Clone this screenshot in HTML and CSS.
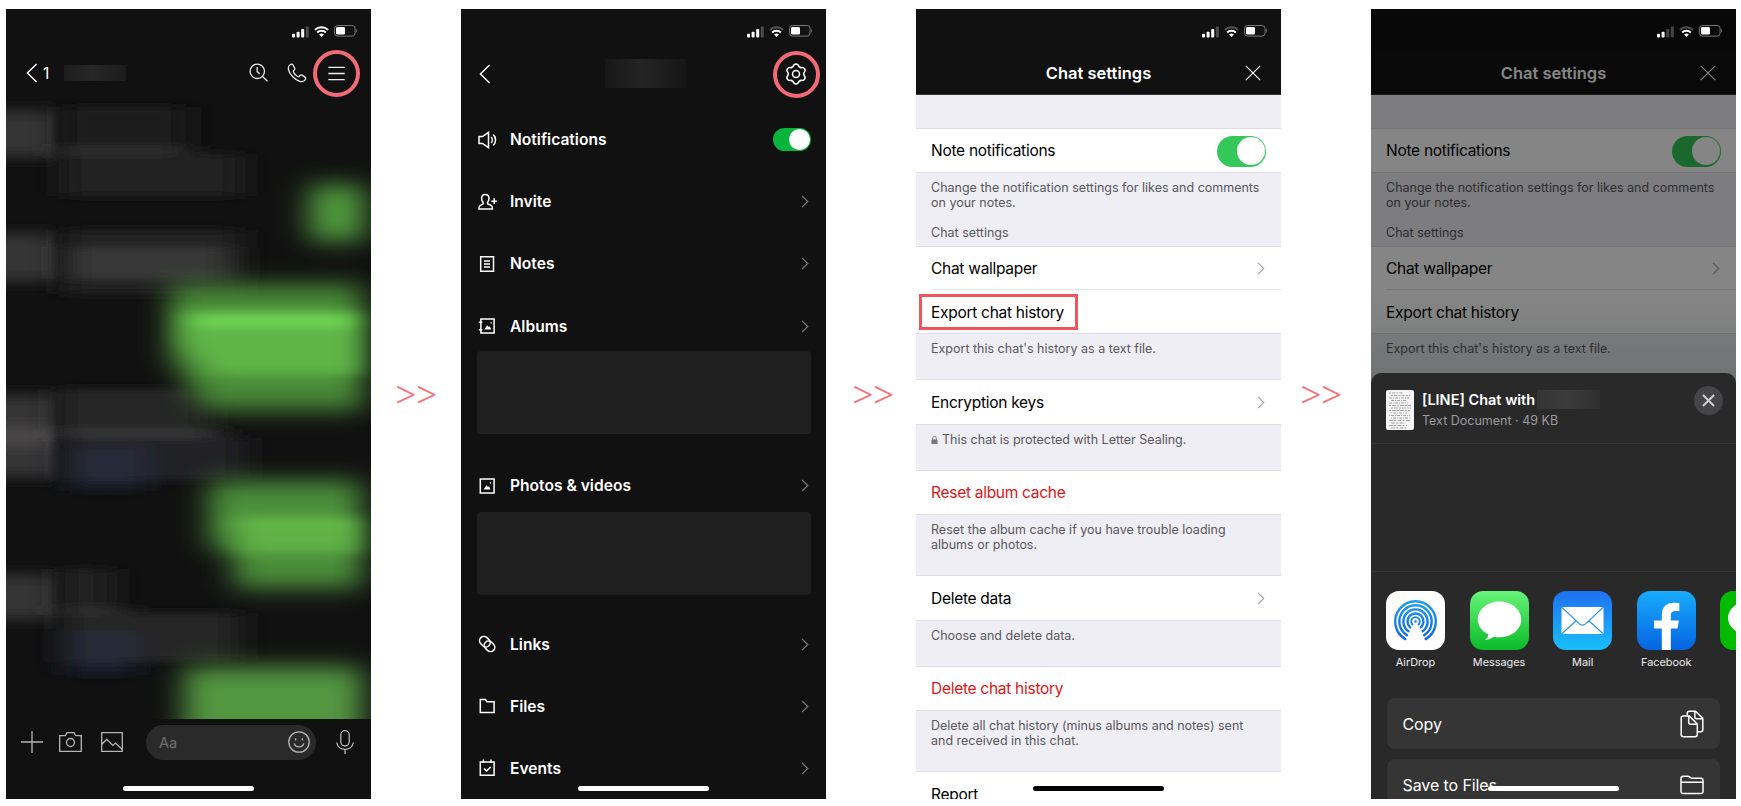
FILE: index.html
```html
<!DOCTYPE html>
<html lang="en">
<head>
<meta charset="utf-8">
<title>Export chat history</title>
<link rel="stylesheet" href="styles.css">
</head>
<body>
<svg class="defs" width="0" height="0" aria-hidden="true">
  <defs>
    <symbol id="signal" viewBox="0 0 17 11"><rect x="0" y="7.3" width="3" height="3.7" rx=".8"/><rect x="4.6" y="5.2" width="3" height="5.8" rx=".8"/><rect x="9.2" y="2.4" width="3" height="8.6" rx=".8"/><rect x="13.8" y="0" width="3" height="11" rx=".8" opacity=".25"/></symbol>
    <symbol id="signal-weak" viewBox="0 0 17 11"><rect x="0" y="7.3" width="3" height="3.7" rx=".8"/><rect x="4.6" y="5.2" width="3" height="5.8" rx=".8"/><rect x="9.2" y="2.4" width="3" height="8.6" rx=".8" opacity=".25"/><rect x="13.8" y="0" width="3" height="11" rx=".8" opacity=".25"/></symbol>
    <symbol id="wifi" viewBox="0 0 15 11"><path class="wifi-outer" d="M.9 3.9a9.4 9.4 0 0 1 13.2 0" fill="none" stroke="currentColor" stroke-width="2"/><path d="M3.2 6.5a6.1 6.1 0 0 1 8.6 0" fill="none" stroke="currentColor" stroke-width="2"/><path d="M7.5 11 5.1 8.6a3.4 3.4 0 0 1 4.8 0z"/></symbol>
    <symbol id="battery" viewBox="0 0 24 12"><rect x=".5" y=".5" width="20.6" height="10.6" rx="3" fill="none" stroke="#777" stroke-width="1"/><rect x="2" y="2" width="9" height="7.6" rx="1.4"/><path d="M22.3 3.8v4c1.2-.6 1.2-3.4 0-4z" fill="#777"/></symbol>
    <symbol id="back" viewBox="0 0 12 20"><path d="M10.6 1 1.4 10l9.2 9" fill="none" stroke="currentColor" stroke-width="1.4"/></symbol>
    <symbol id="chev" viewBox="0 0 8 13"><path d="M1 .9 6.7 6.5 1 12.1" fill="none" stroke="currentColor" stroke-width="1.3"/></symbol>
    <symbol id="cross" viewBox="0 0 16 16"><path d="m.8.8 14.4 14.4M15.2.8.8 15.2" fill="none" stroke="currentColor" stroke-width="1.2"/></symbol>
  </defs>
</svg>

<main class="steps">
  <section class="phone dark">
    <div class="status"><svg class="sig"><use href="#signal"/></svg><svg class="wifi full"><use href="#wifi"/></svg><svg class="bat"><use href="#battery"/></svg></div>
    <header class="chat-head">
      <svg class="back"><use href="#back"/></svg><span class="unread">1</span><span class="name-mask"></span>
      <svg class="i-search" viewBox="0 0 20 20"><circle cx="8.3" cy="8.3" r="7.2"/><path d="m13.5 13.5 5 4.8M8.200 4v4.800l2.500 2"/></svg>
      <svg class="i-call" viewBox="0 0 20 20"><path d="M4.600 1.200C2.800 1.700.9 3.600 1.400 6.300c.9 4.900 6.700 11 11.900 12.300 2.400.5 4.900-1.100 5.300-2.800.2-.8 0-1.300-.5-1.700l-3-2c-.6-.4-1.200-.4-1.700.1l-1.300 1.300c-.5.4-1 .4-1.600 0-1.800-1.200-3-2.600-4-4.200-.4-.7-.3-1.100.1-1.500L7.500 6.700c.5-.5.5-1.100.2-1.600L5.900 1.800c-.3-.5-.7-.7-1.300-.6z"/></svg>
      <span class="menu-ring"><svg viewBox="0 0 17 15"><path d="M.3 1.300h16.400M.3 7.500h16.400M.3 13.700h16.400"/></svg></span>
    </header>
    <svg class="thread" viewBox="0 0 365 626">
      <defs>
        <filter id="soft" filterUnits="userSpaceOnUse" x="60" y="0" width="380" height="720"><feGaussianBlur stdDeviation="15 11"/></filter>
        <filter id="glow" filterUnits="userSpaceOnUse" x="60" y="0" width="380" height="720"><feGaussianBlur stdDeviation="14 6"/></filter>
        <filter id="fine" filterUnits="userSpaceOnUse" x="-20" y="-20" width="400" height="680"><feGaussianBlur stdDeviation="16 4"/></filter>
        <filter id="face" filterUnits="userSpaceOnUse" x="-60" y="-20" width="200" height="680"><feGaussianBlur stdDeviation="5 7"/></filter>
      </defs>
      <g filter="url(#face)">
        <rect x="-40" y="18" width="89" height="46" fill="#353535"/>
        <rect x="-40" y="141" width="89" height="47" fill="#353535"/>
        <rect x="-40" y="302" width="89" height="82" fill="#343434"/>
        <rect x="-40" y="334" width="89" height="18" fill="#4b4848"/>
        <rect x="-40" y="482" width="89" height="44" fill="#363636"/>
      </g>
      <g filter="url(#fine)">
        <rect x="56" y="14" width="124" height="44" fill="#1f1f1f"/>
        <rect x="50" y="54" width="130" height="9" fill="#303030"/>
        <rect x="58" y="61" width="176" height="42" fill="#212121"/>
        <rect x="58" y="137" width="176" height="64" fill="#212121"/>
        <rect x="62" y="154" width="160" height="32" fill="#373737"/>
        <rect x="52" y="296" width="150" height="40" fill="#262626"/>
        <rect x="52" y="336" width="160" height="9" fill="#383838"/>
        <rect x="58" y="345" width="180" height="42" fill="#242425"/>
        <rect x="64" y="354" width="76" height="34" fill="#252a38"/>
        <rect x="64" y="388" width="76" height="10" fill="#141a29"/>
        <rect x="54" y="476" width="52" height="38" fill="#222"/>
        <rect x="52" y="514" width="66" height="8" fill="#303030"/>
        <rect x="58" y="520" width="174" height="48" fill="#272727"/>
        <rect x="60" y="538" width="70" height="32" fill="#252a38"/>
        <rect x="60" y="570" width="70" height="12" fill="#141a29"/>
      </g>
      <g filter="url(#soft)">
        <rect x="303" y="92" width="56" height="56" fill="#4f963c"/>
        <path d="M164 192h192v125H200l-36-52z" fill="#4a8b38"/>
        <path d="M203 388h152v107H228v-38h-25z" fill="#4b8e3a"/>
        <rect x="178" y="574" width="178" height="110" fill="#529640"/>
      </g>
      <g filter="url(#glow)">
        <path d="M178 218h174v64H208l-30-34z" fill="#61b548"/>
        <rect x="186" y="224" width="164" height="7" fill="#78ee58"/>
        <rect x="234" y="424" width="118" height="36" fill="#60b147"/>
        <rect x="226" y="426" width="126" height="5" fill="#69c44d"/>
      </g>
    </svg>
    <footer class="composer">
      <svg class="i-plus" viewBox="0 0 22 22"><path d="M0 11h22M11 0v22"/></svg>
      <svg class="i-cam" viewBox="0 0 23 20"><path d="M.7 3.700h5.600L8 .7h7l1.700 3h5.600v15.600H.7z"/><circle cx="11.500" cy="10.500" r="4"/></svg>
      <svg class="i-pic" viewBox="0 0 22 20"><path d="M.7.7h20.600v18.600H.7zM1 12.200l4.800-5 6 6.200 2.600-2.300 6.700 6.200"/></svg>
      <div class="field"><span>Aa</span><svg viewBox="0 0 22 22"><circle cx="11" cy="11" r="10.200"/><path d="M6.200 12.400c1.200 4.600 8.400 4.600 9.600 0"/><path class="dots" d="M7.600 7.200v2.200M14.400 7.200v2.200"/></svg></div>
      <svg class="i-mic" viewBox="0 0 18 24"><rect x="4.800" y=".7" width="8.400" height="15.300" rx="4.200"/><path d="M.7 12.500c.6 4.200 4 6.800 8.300 6.800s7.700-2.600 8.300-6.800M9 19.300V24"/></svg>
    </footer>
    <span class="home"></span>
  </section>

  <span class="next">&gt;&gt;</span>

  <section class="phone dark">
    <div class="status"><svg class="sig"><use href="#signal"/></svg><svg class="wifi"><use href="#wifi"/></svg><svg class="bat"><use href="#battery"/></svg></div>
    <header class="menu-head">
      <svg class="back"><use href="#back"/></svg>
      <span class="title-mask"></span>
      <span class="gear-ring"><svg viewBox="-11 -11 22 22"><path d="M-3-7.300C-1.800-11 1.800-11 3-7.300L4.820-6.250C8.630-7.060 10.430-3.940 7.820-1.050V1.050C10.430 3.940 8.630 7.060 4.820 6.250L3 7.300C1.800 11-1.800 11-3 7.300L-4.820 6.250C-8.630 7.060-10.430 3.940-7.820 1.050V-1.050C-10.430-3.940-8.630-7.060-4.820-6.250z"/><circle r="3.500"/></svg></span>
    </header>
    <div class="menu">
      <div class="item"><svg viewBox="0 0 20 18"><path d="M1 5.500h3.500l6-4.200v15.400l-6-4.200H1zM13.200 6c1.400 1.600 1.400 4.400 0 6M15.300 3.600c3 2.800 3 8 0 10.800"/></svg><b>Notifications</b><i class="switch small"></i></div>
      <div class="item"><svg viewBox="0 0 20 18"><path d="M7.300 1.600c2.300 0 3.700 1.600 3.700 3.900 0 1.900-.7 2.900-1.500 3.700v1.600l3.500 1.500c1.200.6 1.500 1.300 1.500 3.600H.9c0-2.300.3-3 1.500-3.600l2.700-1.500V9.200c-.8-.8-1.500-1.800-1.500-3.700 0-2.300 1.400-3.900 3.700-3.900zM16.200 5.300v5.800M13.300 8.200h5.800"/></svg><b>Invite</b><svg class="chev"><use href="#chev"/></svg></div>
      <div class="item"><svg viewBox="0 0 20 18"><path d="M2.700 1.700h12.800v14.600H2.700zM6 6h6M6 9h6M6 12h6"/></svg><b>Notes</b><svg class="chev"><use href="#chev"/></svg></div>
      <div class="item"><svg viewBox="0 0 20 18"><path d="M2.900 1.900h13.200v14.200H2.900zM.8 5.200h3.500M.8 12.800h3.500"/><path class="solid" d="m6.300 12.500 2.900-4.200 1.500 1.800 1-.9 1.500 3.300zM12.500 5.300h1.300v1.300h-1.300z"/></svg><b>Albums</b><svg class="chev"><use href="#chev"/></svg></div>
      <div class="strip"></div>
      <div class="item"><svg viewBox="0 0 20 18"><path d="M2.300 1.900h13.800v14.200H2.300z"/><path class="solid" d="m5.600 12.500 2.900-4.200 1.500 1.800 1-.9 1.500 3.300zM11.900 5.300h1.300v1.300h-1.300z"/></svg><b>Photos &amp; videos</b><svg class="chev"><use href="#chev"/></svg></div>
      <div class="strip"></div>
      <div class="item"><svg viewBox="0 0 20 18"><g transform="rotate(45 9.200 9)"><rect x=".2" y="4.700" width="11.400" height="8.600" rx="4.300"/><rect x="6.800" y="4.700" width="11.400" height="8.600" rx="4.300"/></g></svg><b>Links</b><svg class="chev"><use href="#chev"/></svg></div>
      <div class="item"><svg viewBox="0 0 20 18"><path d="M2.300 2.500h5.200l1.500 2.300h7.100v10.800H2.300z"/></svg><b>Files</b><svg class="chev"><use href="#chev"/></svg></div>
      <div class="item"><svg viewBox="0 0 20 18"><path d="M2.300 3h13.800v13.300H2.300zM5.400.5V4M13 .5V4M6 9.500l2.500 2.400 4.400-3.900"/></svg><b>Events</b><svg class="chev"><use href="#chev"/></svg></div>
    </div>
    <span class="home"></span>
  </section>

  <span class="next second">&gt;&gt;</span>

  <section class="phone light">
    <div class="status"><svg class="sig"><use href="#signal"/></svg><svg class="wifi"><use href="#wifi"/></svg><svg class="bat"><use href="#battery"/></svg></div>
    <header class="set-head"><b>Chat settings</b><svg><use href="#cross"/></svg></header>
    <div class="settings">
      <div class="gap first"></div>
      <div class="row short"><span>Note notifications</span><i class="switch"></i></div>
      <div class="gap intro"><p>Change the notification settings for likes and comments on your notes.</p><p class="group">Chat settings</p></div>
      <div class="row inset"><span>Chat wallpaper</span><svg class="chev"><use href="#chev"/></svg></div>
      <div class="row"><span class="boxed">Export chat history</span></div>
      <div class="gap one"><p>Export this chat's history as a text file.</p></div>
      <div class="row"><span>Encryption keys</span><svg class="chev"><use href="#chev"/></svg></div>
      <div class="gap lockgap"><p><svg class="lock" viewBox="0 0 8 10"><path d="M1.900 5V3a2.100 2.100 0 0 1 4.200 0v2" fill="none" stroke="#77777b" stroke-width="1.100"/><rect x=".5" y="4.300" width="7" height="5.400" rx=".8" fill="#77777b"/></svg>This chat is protected with Letter Sealing.</p></div>
      <div class="row short danger"><span>Reset album cache</span></div>
      <div class="gap two"><p>Reset the album cache if you have trouble loading albums or photos.</p></div>
      <div class="row"><span>Delete data</span><svg class="chev"><use href="#chev"/></svg></div>
      <div class="gap lockgap"><p>Choose and delete data.</p></div>
      <div class="row short danger"><span>Delete chat history</span></div>
      <div class="gap two"><p>Delete all chat history (minus albums and notes) sent and received in this chat.</p></div>
      <div class="row"><span>Report</span></div>
    </div>
    <span class="home"></span>
  </section>

  <span class="next third">&gt;&gt;</span>

  <section class="phone light dimmed">
    <div class="status"><svg class="sig"><use href="#signal-weak"/></svg><svg class="wifi"><use href="#wifi"/></svg><svg class="bat"><use href="#battery"/></svg></div>
    <header class="set-head"><b>Chat settings</b><svg><use href="#cross"/></svg></header>
    <div class="settings">
      <div class="gap first"></div>
      <div class="row short"><span>Note notifications</span><i class="switch"></i></div>
      <div class="gap intro"><p>Change the notification settings for likes and comments on your notes.</p><p class="group">Chat settings</p></div>
      <div class="row inset"><span>Chat wallpaper</span><svg class="chev"><use href="#chev"/></svg></div>
      <div class="row"><span>Export chat history</span></div>
      <div class="gap one"><p>Export this chat's history as a text file.</p></div>
    </div>
    <div class="shade"></div>
    <div class="sheet">
      <div class="doc">
        <svg class="thumb" viewBox="0 0 28 40"><rect width="28" height="40" rx="2" fill="#f6f6f6"/><g fill="none" stroke="#999" stroke-width=".9"><path d="M3 3h14M5 5.500h19" stroke-dasharray="2 1 3 1.500"/><path d="M3 8h20M5 10.500h15M3 13h19" stroke-dasharray="3 1 1 1"/><path d="M3 15.500h22M5 18h20M3 20.500h21" stroke-dasharray="2 1 4 1"/><path d="M5 23h16M3 25.500h21M5 28h19" stroke-dasharray="1 1 3 1"/><path d="M3 30.500h21M5 33h14M3 35.500h18M5 38h15" stroke-dasharray="4 1 2 1.500"/></g></svg>
        <div class="doc-text"><div class="doc-title"><b>[LINE] Chat with</b><span class="who-mask"></span></div><small>Text Document · 49 KB</small></div>
        <span class="close"><svg viewBox="0 0 13 13"><path d="m1 1 11 11M12 1 1 12"/></svg></span>
      </div>
      <div class="contacts"></div>
      <div class="apps">
        <div class="app"><svg viewBox="0 0 59 59"><defs><linearGradient id="ad" gradientUnits="userSpaceOnUse" x1="0" y1="10" x2="0" y2="50"><stop stop-color="#1c9cf3"/><stop offset="1" stop-color="#0f62e6"/></linearGradient></defs><rect width="59" height="59" rx="13" fill="#fff"/><g fill="none" stroke="url(#ad)" stroke-width="2.400" stroke-linecap="round"><path d="M19.300 48.100a20.300 20.300 0 1 1 20.400 0"/><path d="M20.900 44.200a16.200 16.200 0 1 1 17.200 0"/><path d="M22.400 40.300a12.100 12.100 0 1 1 14.200 0"/><path d="M24.150 36.450a8 8 0 1 1 10.700 0"/><path d="M26.500 33.500a4.300 4.300 0 1 1 6 0" stroke-width="1.800"/></g><circle cx="29.500" cy="30.500" r="1.300" fill="#147be9"/></svg><span>AirDrop</span></div>
        <div class="app"><svg viewBox="0 0 59 59"><defs><linearGradient id="ms" x2="0" y2="1"><stop stop-color="#67f47a"/><stop offset="1" stop-color="#0abb28"/></linearGradient></defs><rect width="59" height="59" rx="13" fill="url(#ms)"/><path d="M29.500 10.500c12 0 21.700 8 21.700 17.900s-9.700 17.900-21.700 17.900c-2 0-3.900-.2-5.700-.6-2.500 2-5.300 3.100-8.600 3.100 2-1.500 3-3.300 3.300-5.300C12 40.200 7.800 34.800 7.800 28.400c0-9.900 9.700-17.900 21.700-17.900z" fill="#fff"/></svg><span>Messages</span></div>
        <div class="app"><svg viewBox="0 0 59 59"><defs><linearGradient id="ml" x2="0" y2="1"><stop stop-color="#1f70f0"/><stop offset="1" stop-color="#19bffb"/></linearGradient></defs><rect width="59" height="59" rx="13" fill="url(#ml)"/><rect x="8.500" y="16" width="42" height="27" rx="1.500" fill="#fff"/><path d="m9 16.500 17.500 16.300c2 1.700 4 1.700 6 0L50 16.500M9 42.500l14.500-13M50 42.500l-14.500-13" fill="none" stroke="#2390f3" stroke-width="1.100"/></svg><span>Mail</span></div>
        <div class="app"><svg viewBox="0 0 59 59"><defs><linearGradient id="fb" x2="0" y2="1"><stop stop-color="#18acfe"/><stop offset="1" stop-color="#0664e2"/></linearGradient></defs><rect width="59" height="59" rx="13" fill="url(#fb)"/><path d="M24.800 59V37.500H17V29.400h7.800V25c0-8.800 4.200-13.300 12-13.300 2.200 0 4.200.2 5.500.5v7.900h-3.300c-3.900 0-5.200 1.600-5.200 4.800v4.500h8l-1.200 8.100h-6.800V59z" fill="#fff"/></svg><span>Facebook</span></div>
        <div class="app"><svg viewBox="0 0 59 59"><rect width="59" height="59" rx="13" fill="#0b0"/><ellipse cx="29.500" cy="27" rx="21.500" ry="17" fill="#fff"/></svg></div>
      </div>
      <div class="action"><span>Copy</span><svg viewBox="0 0 24 28"><path d="M7.300 5.500V3.200c0-1.300.7-2 2-2h6.200l7.300 7v11.600c0 1.200-.8 2-2 2h-3.300M14.800 1.500v5.200c0 1.300.8 2 2 2h5.700"/><path d="M1.200 8c0-1.300.7-2.100 2-2.100h6l8.100 8.100v10.600c0 1.300-.8 2.100-2.100 2.100h-12c-1.300 0-2-.8-2-2.100zM8.700 6.300v6c0 1.200.8 2 2 2H17"/></svg></div>
      <div class="action"><span>Save to Files</span><svg class="folder" viewBox="0 0 24 20"><path d="M1 3.500C1 2 1.800 1.200 3.300 1.200h4.300c.8 0 1.300.2 1.900.7l1 .8c.5.4.9.5 1.600.5h8.600c1.500 0 2.300.8 2.300 2.300v10.800c0 1.500-.8 2.300-2.300 2.300H3.300C1.800 18.600 1 17.800 1 16.300zM1 7.300h22"/></svg></div>
    </div>
    <span class="home"></span>
  </section>
</main>
</body>
</html>
```
FILE: styles.css
```css
* { box-sizing: border-box; }
body { margin: 0; background: #fff; font-family: Inter, "Liberation Sans", sans-serif; }
.defs { position: absolute; }
p { margin: 0; }
i { font-style: normal; }

.steps { display: flex; width: 1741px; height: 806px; padding: 9px 0 0 6px; overflow: hidden; }
.phone { position: relative; flex: none; width: 365px; height: 790px; overflow: hidden; display: flex; flex-direction: column; background: #111; color: #fff; }
.next { flex: none; width: 90px; height: 42px; margin-top: 364px; padding-left: 24.500px; color: #f4717a; font: 300 36.500px/42px "Open Sans", "Liberation Sans", sans-serif; white-space: nowrap; -webkit-text-stroke: .3px #f4717a; }
.next.second { padding-left: 26.500px; }
.next.third { padding-left: 19.500px; }

/* status bar */
.status { flex: none; display: flex; align-items: flex-start; justify-content: flex-end; height: 42px; padding: 16px 13px 0 0; color: #fff; fill: #fff; }
.sig { width: 17px; height: 12px; margin: 1px 5px 0 0; }
.wifi { --outer: .3; width: 15px; height: 11px; margin: 1px 5px 0 0; }
.wifi.full { --outer: 1; }
.wifi-outer { opacity: var(--outer, .3); }
.bat { width: 24px; height: 12px; }
.home { position: absolute; left: 117px; top: 777px; width: 131px; height: 5px; border-radius: 3px; background: #fff; z-index: 5; }
.light .home { background: #000; }
.dimmed .home { background: #fff; }

/* chat */
.chat-head { flex: none; display: flex; align-items: center; height: 42px; padding: 2px 10px 0 20px; }
.chat-head svg { fill: none; stroke: #eee; stroke-width: 1.3; flex: none; }
.back { width: 12px; height: 20px; color: #fff; }
.unread { margin-left: 5px; width: 11px; font-size: 15.500px; }
.name-mask { width: 62px; height: 16px; margin-left: 10px; background: linear-gradient(90deg, #1d1d1d, #272727 45%, #1c1c1c); }
.i-search { width: 20px; height: 20px; margin-left: 123px; }
.i-call { width: 20px; height: 20px; margin-left: 18px; }
.menu-ring, .gear-ring { width: 47px; height: 47px; border: 4px solid #f26a75; border-radius: 50%; display: flex; align-items: center; justify-content: center; flex: none; }
.menu-ring { margin-left: 6px; }
.menu-ring svg { width: 17px; height: 15px; }
.thread { flex: none; width: 365px; height: 626px; }
.composer { flex: none; display: flex; align-items: center; height: 46px; padding-left: 15px; }
.composer svg { fill: none; stroke: #b5b5b5; stroke-width: 1.3; flex: none; }
.i-plus { width: 22px; height: 22px; }
.i-cam { width: 23px; height: 20px; margin-left: 16px; }
.i-pic { width: 22px; height: 20px; margin-left: 19px; }
.field { display: flex; align-items: center; justify-content: space-between; width: 170px; height: 35px; margin-left: 23px; padding: 0 6px 0 13px; border-radius: 18px; background: #2a2a2a; color: #707070; font-size: 14.500px; }
.field svg { width: 22px; height: 22px; }
.i-mic { width: 18px; height: 24px; margin-left: 19.500px; }

/* chat menu */
.menu-head { flex: none; display: flex; align-items: center; height: 45px; padding: 0 6px 0 18px; }
.title-mask { width: 81px; height: 29px; margin-left: 114px; background: linear-gradient(90deg, #181818, #242424 45%, #161616); }
.gear-ring { margin: 1px 0 0 86.500px; }
.gear-ring svg { width: 22px; height: 22px; fill: none; stroke: #fff; stroke-width: 1.500; stroke-linejoin: round; }
.menu { flex: none; padding: 12.500px 15px 0 17px; }
.item { display: flex; align-items: center; height: 62.200px; font-size: 15.600px; }
.item > svg:first-child { width: 20px; height: 18px; fill: none; stroke: #fff; stroke-width: 1.500; }
.item b { flex: 1; margin-left: 12px; font-weight: 600; white-space: nowrap; }
.item .solid { fill: #fff; stroke: none; }
.chev { width: 8px; height: 13px; margin-right: 2px; color: #777; }
.strip { width: 334px; height: 83px; margin: -6.500px 0 21px -1.500px; border-radius: 4px; background: #202020; }
.strip + .item + .strip { margin: -5px 0 18px -1.500px; }
.switch { flex: none; width: 49px; height: 31px; margin-top: 1px; border-radius: 16px; background: #34c85a; padding: 1.500px; display: flex; justify-content: flex-end; }
.switch::after { content: ""; width: 28px; height: 28px; border-radius: 50%; background: #fff; }
.switch.small { width: 38px; height: 23px; margin: 0 .5px 0 0; background: #07b53b; padding: 1px; }
.switch.small::after { width: 21px; height: 21px; }

/* settings */
.set-head { flex: none; display: flex; align-items: center; justify-content: center; height: 44px; padding-top: 1px; border-bottom: 1px solid #333; position: relative; }
.set-head b { font-size: 16.500px; font-weight: 600; }
.set-head svg { position: absolute; right: 20px; top: 14px; width: 16px; height: 16px; }
.light { background: #fff; }
.light .status, .light .set-head { background: #111; }
.settings { flex: none; color: #000; }
.row { display: flex; align-items: center; justify-content: space-between; height: 44px; padding: 0 15px; background: #fff; font-size: 15.500px; letter-spacing: -.28px; }
.row .chev { color: #a9a9ad; margin-right: 1px; }
.row.short { height: 43px; }
.row.danger { color: #dc1515; }
.row.inset { height: 43px; position: relative; }
.row.inset::after { content: ""; position: absolute; left: 15px; right: 0; bottom: 0; height: 1px; background: #e4e4e6; }
.boxed { height: 36px; margin: 0 0 0 -12px; padding: 5px 11px 4px 9px; border: 3px solid #f2545b; line-height: 21px; }
.gap { padding: 7px 15px 0; background: #efeef4; border: solid #dfdee4; border-width: 1px 0; color: #58585c; font-size: 12.500px; line-height: 15px; }
.gap.first { height: 34px; border-top: 0; }
.gap.intro { height: 75px; }
.gap .group { margin-top: 14.500px; }
.gap.one { height: 47px; margin-top: -1px; }
.gap.lockgap { height: 47px; }
.gap.two { height: 62px; }
.lock { width: 7px; height: 10px; margin-right: 4px; vertical-align: -1px; }

/* share sheet */
.shade { position: absolute; inset: 0; background: linear-gradient(rgba(0,0,0,.48) 280px, rgba(8,16,10,.55) 370px); }
.dimmed .status { position: relative; z-index: 2; background: #080808; }
.sheet { position: absolute; left: 0; right: 0; top: 363.500px; bottom: 0; border-radius: 10px 10px 0 0; background: #292929; overflow: hidden; }
.doc { display: flex; align-items: flex-start; height: 71px; padding: 17px 13px 0 15px; border-bottom: 1px solid #363636; }
.thumb { width: 28px; height: 40px; }
.doc-text { flex: 1; margin-left: 8px; }
.doc-title { display: flex; align-items: center; height: 19px; font-size: 14.500px; }
.doc-title b { font-weight: 600; white-space: nowrap; }
.who-mask { width: 63px; height: 19px; margin-left: 2px; background: linear-gradient(90deg, #353535, #3c3c3c 50%, #303030); }
.doc small { display: block; margin-top: 4px; font-size: 12.500px; line-height: 16px; color: #9a9a9f; }
.close { display: flex; align-items: center; justify-content: center; width: 29px; height: 29px; margin-top: -4px; border-radius: 50%; background: #454548; }
.close svg { width: 13px; height: 13px; stroke: #cfcfd2; stroke-width: 2; }
.contacts { height: 128px; border-bottom: 1px solid #363636; }
.apps { display: flex; gap: 24.600px; height: 126.500px; padding: 19.500px 0 0 15px; }
.app { flex: none; width: 59px; display: flex; flex-direction: column; align-items: center; }
.app svg { width: 59px; height: 59px; }
.app span { margin-top: 5px; font-size: 10.900px; line-height: 14px; color: #ececec; }
.action { display: flex; align-items: center; justify-content: space-between; height: 51px; margin: 0 16px 10px 15.500px; padding: 0 16px; border-radius: 8px; background: #353535; font-size: 16px; letter-spacing: -.1px; }
.action svg { width: 24px; height: 28px; fill: none; stroke: #fff; stroke-width: 1.500; stroke-linejoin: round; }
.action .folder { height: 20px; }
```
